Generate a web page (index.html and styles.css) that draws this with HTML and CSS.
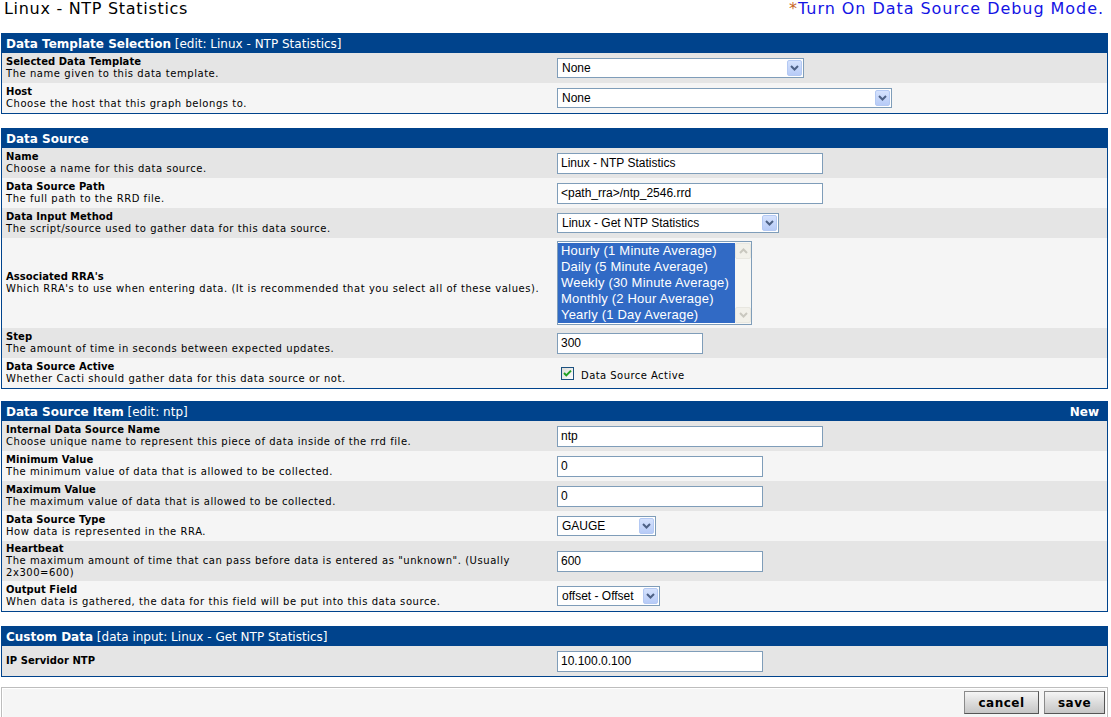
FILE: index.html
```html
<!DOCTYPE html>
<html>
<head>
<meta charset="utf-8">
<title>Linux - NTP Statistics</title>
<link rel="stylesheet" href="styles.css">
</head>
<body>
<div class="page">
  <div class="top">
    <span class="title">Linux - NTP Statistics</span>
    <span class="debug"><span class="ast">*</span>Turn On Data Source Debug Mode.</span>
  </div>

  <div class="box">
    <div class="hdr"><span><b>Data Template Selection</b> [edit: Linux - NTP Statistics]</span></div>
    <div class="row dk">
      <div class="lbl"><b>Selected Data Template</b><br>The name given to this data template.</div>
      <div class="ctl"><div class="sel w247"><span>None</span><span class="arr"><svg width="9" height="6" viewBox="0 0 9 6"><path d="M1 1 L4.5 4.5 L8 1" fill="none" stroke="#4d6185" stroke-width="2"/></svg></span></div></div>
    </div>
    <div class="row lt">
      <div class="lbl"><b>Host</b><br>Choose the host that this graph belongs to.</div>
      <div class="ctl"><div class="sel w335"><span>None</span><span class="arr"><svg width="9" height="6" viewBox="0 0 9 6"><path d="M1 1 L4.5 4.5 L8 1" fill="none" stroke="#4d6185" stroke-width="2"/></svg></span></div></div>
    </div>
  </div>

  <div class="box g15">
    <div class="hdr"><span><b>Data Source</b></span></div>
    <div class="row dk">
      <div class="lbl"><b>Name</b><br>Choose a name for this data source.</div>
      <div class="ctl"><div class="txt w266">Linux - NTP Statistics</div></div>
    </div>
    <div class="row lt">
      <div class="lbl"><b>Data Source Path</b><br>The full path to the RRD file.</div>
      <div class="ctl"><div class="txt w266">&lt;path_rra&gt;/ntp_2546.rrd</div></div>
    </div>
    <div class="row dk">
      <div class="lbl"><b>Data Input Method</b><br>The script/source used to gather data for this data source.</div>
      <div class="ctl"><div class="sel w222"><span>Linux - Get NTP Statistics</span><span class="arr"><svg width="9" height="6" viewBox="0 0 9 6"><path d="M1 1 L4.5 4.5 L8 1" fill="none" stroke="#4d6185" stroke-width="2"/></svg></span></div></div>
    </div>
    <div class="row lt rra">
      <div class="lbl"><b>Associated RRA's</b><br>Which RRA's to use when entering data. (It is recommended that you select all of these values).</div>
      <div class="ctl">
        <div class="list">
          <div class="opts">
            <div>Hourly (1 Minute Average)</div>
            <div>Daily (5 Minute Average)</div>
            <div>Weekly (30 Minute Average)</div>
            <div>Monthly (2 Hour Average)</div>
            <div>Yearly (1 Day Average)</div>
          </div>
          <div class="sb">
            <span class="sbb"><svg width="9" height="6" viewBox="0 0 9 6"><path d="M1 5 L4.5 1.5 L8 5" fill="none" stroke="#c9c8bf" stroke-width="2"/></svg></span>
            <span class="track"></span>
            <span class="sbb"><svg width="9" height="6" viewBox="0 0 9 6"><path d="M1 1 L4.5 4.5 L8 1" fill="none" stroke="#c9c8bf" stroke-width="2"/></svg></span>
          </div>
        </div>
      </div>
    </div>
    <div class="row dk">
      <div class="lbl"><b>Step</b><br>The amount of time in seconds between expected updates.</div>
      <div class="ctl"><div class="txt w146">300</div></div>
    </div>
    <div class="row lt">
      <div class="lbl"><b>Data Source Active</b><br>Whether Cacti should gather data for this data source or not.</div>
      <div class="ctl">
        <label class="chk"><svg width="13" height="13" viewBox="0 0 13 13"><defs><linearGradient id="cg" x1="0" y1="0" x2="1" y2="1"><stop offset="0" stop-color="#dcdcd7"/><stop offset="1" stop-color="#ffffff"/></linearGradient></defs><rect x="0.5" y="0.5" width="12" height="12" fill="url(#cg)" stroke="#1c5180"/><path d="M3 6 L5.3 8.4 L10 3.6" fill="none" stroke="#21a121" stroke-width="2"/></svg><span>Data Source Active</span></label>
      </div>
    </div>
  </div>

  <div class="box g12">
    <div class="hdr"><span><b>Data Source Item</b> [edit: ntp]</span><b>New</b></div>
    <div class="row dk">
      <div class="lbl"><b>Internal Data Source Name</b><br>Choose unique name to represent this piece of data inside of the rrd file.</div>
      <div class="ctl"><div class="txt w266">ntp</div></div>
    </div>
    <div class="row lt">
      <div class="lbl"><b>Minimum Value</b><br>The minimum value of data that is allowed to be collected.</div>
      <div class="ctl"><div class="txt w206">0</div></div>
    </div>
    <div class="row dk">
      <div class="lbl"><b>Maximum Value</b><br>The maximum value of data that is allowed to be collected.</div>
      <div class="ctl"><div class="txt w206">0</div></div>
    </div>
    <div class="row lt">
      <div class="lbl"><b>Data Source Type</b><br>How data is represented in the RRA.</div>
      <div class="ctl"><div class="sel w99"><span>GAUGE</span><span class="arr"><svg width="9" height="6" viewBox="0 0 9 6"><path d="M1 1 L4.5 4.5 L8 1" fill="none" stroke="#4d6185" stroke-width="2"/></svg></span></div></div>
    </div>
    <div class="row dk tall">
      <div class="lbl"><b>Heartbeat</b><br>The maximum amount of time that can pass before data is entered as "unknown". (Usually 2x300=600)</div>
      <div class="ctl"><div class="txt w206">600</div></div>
    </div>
    <div class="row lt">
      <div class="lbl"><b>Output Field</b><br>When data is gathered, the data for this field will be put into this data source.</div>
      <div class="ctl"><div class="sel w103"><span>offset - Offset</span><span class="arr"><svg width="9" height="6" viewBox="0 0 9 6"><path d="M1 1 L4.5 4.5 L8 1" fill="none" stroke="#4d6185" stroke-width="2"/></svg></span></div></div>
    </div>
  </div>

  <div class="box g15">
    <div class="hdr"><span><b>Custom Data</b> [data input: Linux - Get NTP Statistics]</span></div>
    <div class="row dk">
      <div class="lbl"><b>IP Servidor NTP</b></div>
      <div class="ctl"><div class="txt w206">10.100.0.100</div></div>
    </div>
  </div>

  <div class="savebox">
    <div class="savein">
      <button class="btn bc">cancel</button>
      <button class="btn bs">save</button>
    </div>
  </div>
</div>
</body>
</html>
```

FILE: styles.css
```css
body {
  margin: 0;
  background: #ffffff;
  color: #000000;
  font-family: "DejaVu Sans", Verdana, sans-serif;
  font-size: 10px;
}

.page {
  width: 1107px;
  margin-left: 1px;
}

.top {
  display: flex;
  justify-content: space-between;
  align-items: flex-start;
  height: 33px;
  padding: 0 4px 0 3px;
  font-size: 16px;
  line-height: 18px;
}

.title {
  letter-spacing: 0.7px;
}

.debug {
  color: #1414e4;
  letter-spacing: 0.95px;
}

.ast {
  color: #c8651f;
}

.box {
  border: 1px solid #00438c;
}

.g15 { margin-top: 14px; }
.g12 { margin-top: 12px; }

.hdr {
  background: #00438c;
  color: #ffffff;
  height: 19px;
  display: flex;
  justify-content: space-between;
  align-items: center;
  padding: 0 8px 0 4px;
  font-size: 12px;
}

.row {
  display: flex;
  align-items: center;
  min-height: 30px;
}

.dk { background: #e5e5e5; }
.lt { background: #f5f5f5; }

.rra { min-height: 90px; }
.tall { min-height: 40px; }

.lbl {
  width: 555px;
  flex: none;
  box-sizing: border-box;
  padding: 2px 2px 2px 4px;
  line-height: 12px;
  letter-spacing: 0.55px;
}

.lbl b {
  letter-spacing: 0.05px;
}

.ctl {
  flex: 1;
  display: flex;
  align-items: center;
}

.txt, .sel {
  box-sizing: border-box;
  border: 1px solid #7f9db9;
  background: #ffffff;
  font-family: "Liberation Sans", Arial, sans-serif;
  font-size: 12px;
  white-space: nowrap;
  overflow: hidden;
}

.txt {
  height: 21px;
  line-height: 19px;
  padding-left: 3px;
}

.sel {
  height: 20px;
  display: flex;
  align-items: center;
  justify-content: space-between;
  padding: 0 1px 0 4px;
}

.arr {
  width: 15px;
  height: 16px;
  box-sizing: border-box;
  border: 1px solid #b4c9f3;
  border-radius: 2px;
  background: linear-gradient(#d5e2fd, #b7cbf7);
  display: flex;
  align-items: center;
  justify-content: center;
}

.w99 { width: 99px; }
.w103 { width: 103px; }
.w146 { width: 146px; }
.w206 { width: 206px; }
.w222 { width: 222px; }
.w247 { width: 247px; }
.w266 { width: 266px; }
.w335 { width: 335px; }

.list {
  display: flex;
  width: 195px;
  height: 84px;
  box-sizing: border-box;
  border: 1px solid #7f9db9;
  background: #ffffff;
}

.opts {
  flex: 1;
  padding-top: 1px;
  font-family: "Liberation Sans", Arial, sans-serif;
  font-size: 13px;
  line-height: 16px;
  letter-spacing: 0.2px;
  white-space: nowrap;
  overflow: hidden;
}

.opts div {
  background: #316ac5;
  color: #ffffff;
  padding-left: 3px;
}

.sb {
  width: 16px;
  display: flex;
  flex-direction: column;
  background: #f7f7f4;
  padding: 1px 0;
  box-sizing: border-box;
}

.sbb {
  height: 16px;
  box-sizing: border-box;
  border: 1px solid #e8e7e0;
  border-radius: 2px;
  background: #f2f1ea;
  display: flex;
  align-items: center;
  justify-content: center;
}

.track { flex: 1; }

.chk {
  display: flex;
  align-items: center;
  gap: 7px;
  margin-left: 4px;
  letter-spacing: 0.45px;
}

.chk span {
  padding-top: 4px;
}

.chk svg { display: block; }

.savebox {
  margin-top: 10px;
  border: 1px solid #bdbdbd;
  padding: 1px;
}

.savein {
  background: #f5f5f5;
  display: flex;
  justify-content: flex-end;
  gap: 5px;
  padding: 2px 1px 6px 2px;
}

.btn {
  height: 23px;
  box-sizing: border-box;
  border: 1px solid #555555;
  border-top-color: #8a8a8a;
  border-left-color: #8a8a8a;
  background: linear-gradient(#f6f6f6, #dcdcdc 50%, #c6c6c6);
  font-family: "DejaVu Sans", Verdana, sans-serif;
  font-weight: bold;
  font-size: 12px;
  letter-spacing: 0.5px;
  color: #000000;
  padding: 0;
}

.bc { width: 75px; }
.bs { width: 61px; }
```
